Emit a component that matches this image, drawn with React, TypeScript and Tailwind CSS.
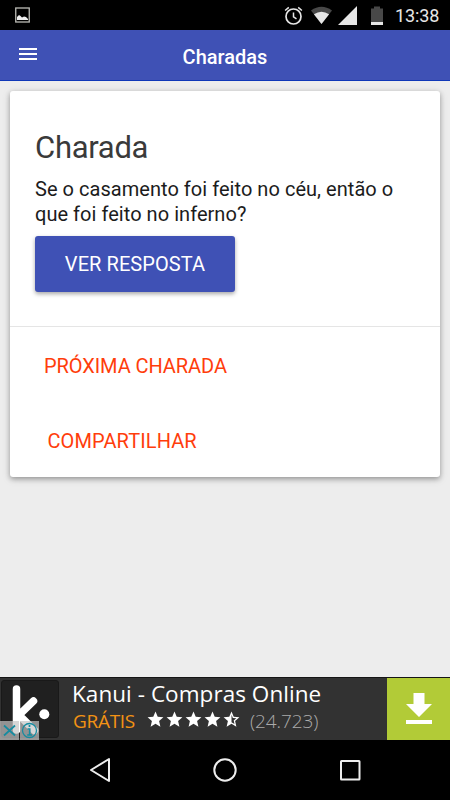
import type { ReactNode } from "react";

const STAR = "M12 17.27 18.18 21l-1.64-7.03L22 9.24l-7.19-.61L12 2 9.19 8.63 2 9.24l5.46 4.73L5.82 21z";
const HALF_STAR =
  "M22 9.24l-7.19-.62L12 2 9.19 8.63 2 9.24l5.46 4.73L5.82 21 12 17.27 18.18 21l-1.63-7.03L22 9.24zM12 15.4V6.1l1.71 4.04 4.38.38-3.32 2.88 1 4.28L12 15.4z";

function StatusBar() {
  return (
    <div className="flex h-[30px] items-center bg-black pl-[15px] pr-[10px] text-[#e6e6e6]">
      <svg className="h-4 w-[15px]" viewBox="0 0 15 16">
        <rect x=".75" y="1" width="13.5" height="14" fill="none" stroke="#bcbcb6" strokeWidth="1.3" />
        <path d="M2 13V10l2-2 1.5 1 1.5 1.5L9 9.5l2 .5 2 2v1z" fill="#eee" />
      </svg>

      <svg className="ml-auto h-[19px] w-[19px]" viewBox="0 0 19 19" fill="none" stroke="currentColor">
        <circle cx="9.5" cy="10.5" r="7.5" strokeWidth="1.7" />
        <path d="M9.5 6.5v4.3l3 2M1.1 4.5l3.7-3.1M17.9 4.5l-3.7-3.1" strokeWidth="1.5" />
      </svg>
      <svg className="ml-[7px] h-[19px] w-[23px]" viewBox="0 0 23 19">
        <path d="M1 4.5Q11.5-3 22 4.5L11.5 18z" fill="#484848" />
        <path d="M3.9 8.3Q11.5 3.3 19.1 8.3L11.5 18z" fill="currentColor" />
      </svg>
      <svg className="ml-[5px] h-[19px] w-[19px]" viewBox="0 0 19 19">
        <path d="M19 0v19H0z" fill="currentColor" />
      </svg>
      <svg className="ml-[14px] h-[19px] w-[12px]" viewBox="0 0 12 19">
        <path d="M0 2.5h3V.5h6v2h3V19H0z" fill="#484848" />
        <path d="M0 16h12v3H0z" fill="currentColor" />
      </svg>
      <span className="ml-[12px] w-[45px] whitespace-nowrap pt-px text-[18px] leading-[29px] tracking-[-0.1px]">
        13:38
      </span>
    </div>
  );
}

function Header() {
  return (
    <header className="grid h-[51px] grid-cols-3 items-start border-b border-[#1038b8] bg-[#3f51b5] text-white">
      <svg className="ml-[19px] mt-[18px] h-[12px] w-[18px]" viewBox="0 0 18 12" fill="currentColor">
        <path d="M0 0h18v2H0zM0 5h18v2H0zM0 10h18v2H0z" />
      </svg>
      <h1 className="pt-px text-center text-[20px] font-medium leading-[52px]">Charadas</h1>
    </header>
  );
}

function LinkButton(props: { className: string; children: ReactNode }) {
  return (
    <button type="button" className={`block whitespace-nowrap text-[20px] leading-[26px] text-[#ff3d0b] ${props.className}`}>
      {props.children}
    </button>
  );
}

function RiddleCard() {
  return (
    <section className="mx-[10px] mt-[10px] h-[386px] rounded-[3px] bg-white shadow-[0_2px_5px_rgba(0,0,0,0.3),0_2px_10px_rgba(0,0,0,0.12)]">
      <div className="h-[235px] px-[25px] pt-[37px]">
        <h2 className="whitespace-nowrap text-[31px] leading-[40px] tracking-[-0.3px] text-[#3a3a3a]">Charada</h2>
        <p className="mt-[9px] whitespace-nowrap text-[20px] leading-[25px] tracking-[0.04px] text-[#1c1c1c]">
          Se o casamento foi feito no céu, então o
          <br />
          que foi feito no inferno?
        </p>
        <button
          type="button"
          className="mt-[9px] h-[56px] w-[200px] whitespace-nowrap rounded-[3px] bg-[#3f51b5] text-[20px] tracking-[0.07px] text-white shadow-[0_2px_4px_rgba(0,0,0,0.35)]"
        >
          VER RESPOSTA
        </button>
      </div>
      <div className="border-t border-[#e5e5e5] pt-[26px]">
        <LinkButton className="ml-[34px] tracking-[-0.07px]">PRÓXIMA CHARADA</LinkButton>
        <LinkButton className="ml-[37.5px] mt-[49px] tracking-[0.1px]">COMPARTILHAR</LinkButton>
      </div>
    </section>
  );
}

function AppIcon() {
  return (
    <svg className="h-[62px] w-[60px]" viewBox="0 0 60 62">
      <rect x="1.5" y="2.5" width="57" height="57" rx="2.5" fill="#202020" stroke="#191919" />
      <path d="M16.5 11v41M33.5 23 19 37l15.5 15.5" fill="none" stroke="white" strokeWidth="7.5" strokeLinecap="round" />
      <circle cx="44.3" cy="36.2" r="5" fill="white" />
      <path d="M0 43h19v19H0zM20 43h19v19H20z" fill="#c4c4c4" fillOpacity=".7" />
      <g fill="none" stroke="#168ba0" strokeWidth="1.7">
        <path d="m4 47.5 11 10M15 47.5l-11 10" />
        <circle cx="29.5" cy="52.5" r="7" strokeWidth="1.3" />
        <path d="M27.5 51h2.2v6M27.2 57h5M29.5 47v2" />
      </g>
    </svg>
  );
}

function AdBanner() {
  return (
    <div className="flex h-[63px] items-stretch border-t border-[#151515] bg-[#323232] font-['Open_Sans',sans-serif]">
      <AppIcon />
      <div className="w-[327px] pl-[12px] pt-px">
        <div className="whitespace-nowrap text-[22.5px] leading-[29px] tracking-[0.05px] text-white">Kanui - Compras Online</div>
        <div className="flex h-[27px] items-center whitespace-nowrap pl-px">
          <span className="w-[73px] text-[19px] leading-[25px] tracking-[-0.3px] text-[#f39214]">GRÁTIS</span>
          <svg className="-mt-[5px] h-[19px] w-[95px] shrink-0" viewBox="0 0 120 24" fill="white">
            <path d={STAR} />
            <path d={STAR} transform="translate(24 0)" />
            <path d={STAR} transform="translate(48 0)" />
            <path d={STAR} transform="translate(72 0)" />
            <path d={HALF_STAR} transform="translate(96 0)" />
          </svg>
          <span className="ml-[9px] text-[19px] font-light leading-[25px] tracking-[-0.1px] text-[#aaa]">(24.723)</span>
        </div>
      </div>
      <div className="flex flex-1 items-center justify-center bg-[#b2cb37]">
        <svg className="h-[32px] w-[26px]" viewBox="0 0 26 32" fill="white">
          <path d="M7.5 0h11v11H26L13 24 0 11h7.5zM0 27h26v4H0z" />
        </svg>
      </div>
    </div>
  );
}

function NavigationBar() {
  return (
    <nav className="flex h-[60px] items-center justify-center bg-black">
      <svg className="h-[26px] w-[272px]" viewBox="0 0 272 26" fill="none" stroke="#ededed" strokeWidth="2" strokeLinejoin="round">
        <path d="M2 13 20 2v22z" />
        <circle cx="136" cy="13" r="10.7" />
        <rect x="252" y="4" width="18.5" height="18.5" rx=".5" />
      </svg>
    </nav>
  );
}

export default function App() {
  return (
    <div className="flex h-[800px] w-[450px] flex-col overflow-hidden bg-[#ededed] font-[Roboto,sans-serif]">
      <StatusBar />
      <Header />
      <main className="flex flex-1 flex-col">
        <RiddleCard />
      </main>
      <AdBanner />
      <NavigationBar />
    </div>
  );
}
